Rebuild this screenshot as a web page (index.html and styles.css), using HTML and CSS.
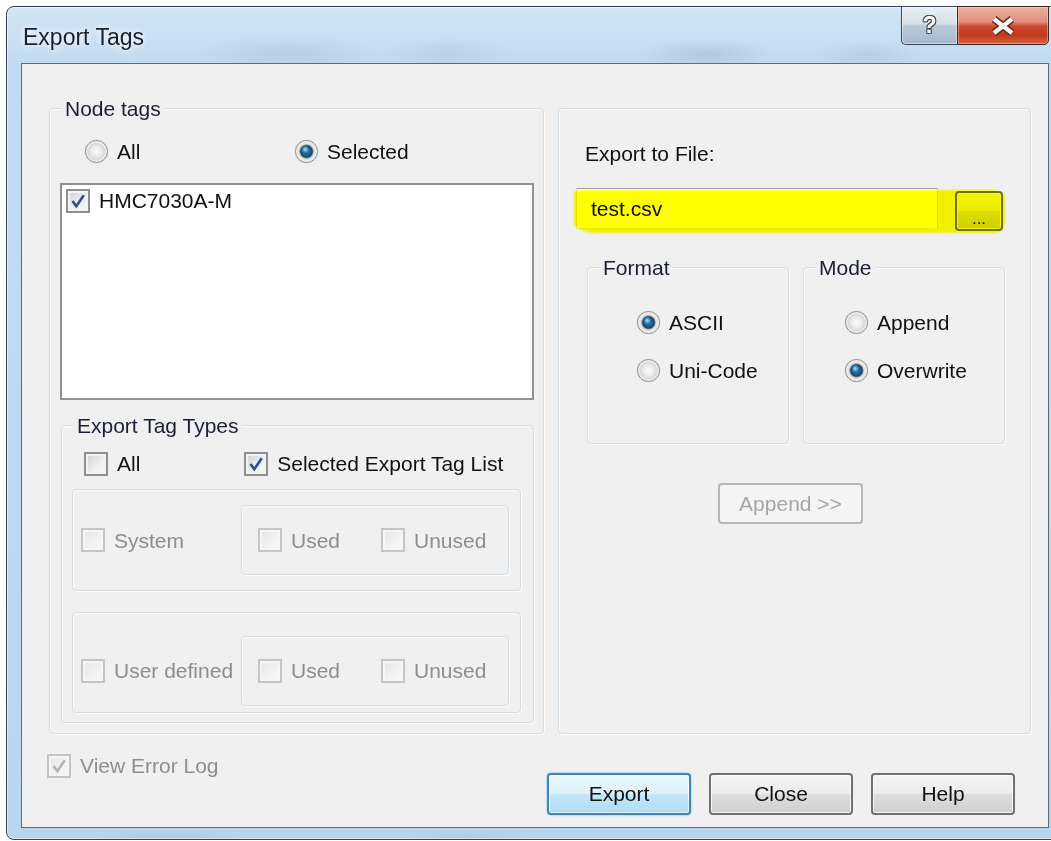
FILE: index.html
```html
<!DOCTYPE html>
<html lang="en">
<head>
<meta charset="utf-8">
<title>Export Tags</title>
<link rel="stylesheet" href="styles.css">
</head>
<body>
<div class="window">
  <div class="titlebar">
    <span class="title">Export Tags</span>
    <div class="caption-buttons">
      <button class="cap cap-help"><span class="cap-q">?</span></button>
      <button class="cap cap-close">
        <svg class="cap-x" width="28" height="20" viewBox="0 0 28 20">
          <path d="M5 3 L23 17 M23 3 L5 17" stroke="#6a2c1f" stroke-width="7.5" fill="none"/>
          <path d="M5 3 L23 17 M23 3 L5 17" stroke="#f4f4f4" stroke-width="4.4" fill="none"/>
        </svg>
      </button>
    </div>
  </div>

  <div class="client">
    <div class="panels">
      <div class="group panel-left">
        <span class="group-label">Node tags</span>
        <div class="radio-row">
          <span class="opt"><span class="radio"></span>All</span>
          <span class="opt"><span class="radio on"></span>Selected</span>
        </div>
        <div class="listbox">
          <div class="list-item">
            <span class="check"><svg class="tick" viewBox="0 0 20 20"><path d="M4.5 10 L8.3 15.2 L15.8 4.2"/></svg></span>HMC7030A-M
          </div>
        </div>

        <div class="group tag-types">
          <span class="group-label">Export Tag Types</span>
          <div class="check-row">
            <span class="opt"><span class="check"></span>All</span>
            <span class="opt opt-wide"><span class="check"><svg class="tick" viewBox="0 0 20 20"><path d="M4.5 10 L8.3 15.2 L15.8 4.2"/></svg></span>Selected Export Tag List</span>
          </div>

          <div class="group subgroup">
            <span class="opt disabled sub-name"><span class="check"></span>System</span>
            <div class="group subgroup-inner">
              <span class="opt disabled sub-used"><span class="check"></span>Used</span>
              <span class="opt disabled"><span class="check"></span>Unused</span>
            </div>
          </div>

          <div class="group subgroup subgroup-low">
            <span class="opt disabled sub-name"><span class="check"></span>User defined</span>
            <div class="group subgroup-inner">
              <span class="opt disabled sub-used"><span class="check"></span>Used</span>
              <span class="opt disabled"><span class="check"></span>Unused</span>
            </div>
          </div>
        </div>
      </div>

      <div class="group panel-right">
        <div class="file-label">Export to File:</div>
        <div class="file-row">
          <div class="textbox">test.csv</div>
          <button class="btn browse">...</button>
        </div>

        <div class="option-groups">
          <div class="group option-group">
            <span class="group-label">Format</span>
            <div class="radio-col format-col">
              <span class="opt"><span class="radio on"></span>ASCII</span>
              <span class="opt"><span class="radio"></span>Uni-Code</span>
            </div>
          </div>
          <div class="group option-group">
            <span class="group-label">Mode</span>
            <div class="radio-col mode-col">
              <span class="opt"><span class="radio"></span>Append</span>
              <span class="opt"><span class="radio on"></span>Overwrite</span>
            </div>
          </div>
        </div>

        <button class="btn btn-disabled append">Append &gt;&gt;</button>
      </div>
    </div>

    <div class="footer">
      <span class="opt disabled error-log"><span class="check"><svg class="tick" viewBox="0 0 20 20"><path d="M4.5 10 L8.3 15.2 L15.8 4.2"/></svg></span>View Error Log</span>
      <div class="actions">
        <button class="btn btn-default">Export</button>
        <button class="btn">Close</button>
        <button class="btn">Help</button>
      </div>
    </div>
  </div>
</div>
</body>
</html>
```

FILE: styles.css
```css
* {
  box-sizing: border-box;
}

html,
body {
  margin: 0;
  height: 100%;
}

body {
  background: #ffffff;
  overflow: hidden;
  font-family: "Liberation Sans", Arial, sans-serif;
  font-size: 21px;
  color: #111111;
}

/* ---------- window frame (Aero glass) ---------- */
.window {
  width: 1058px;
  height: 834px;
  margin: 6px 0 0 6px;
  padding: 0 14px 11px;
  border: 1px solid #34404c;
  border-radius: 8px;
  background:
    radial-gradient(ellipse 120px 24px at 280px 46px, rgba(110, 130, 150, 0.16), transparent 75%),
    radial-gradient(ellipse 90px 20px at 440px 46px, rgba(110, 130, 150, 0.12), transparent 75%),
    radial-gradient(ellipse 90px 20px at 700px 47px, rgba(100, 120, 140, 0.2), transparent 75%),
    radial-gradient(ellipse 70px 18px at 860px 48px, rgba(100, 120, 140, 0.14), transparent 75%),
    radial-gradient(ellipse 120px 14px at 160px 834px, rgba(90, 110, 130, 0.18), transparent 75%),
    radial-gradient(ellipse 110px 14px at 460px 834px, rgba(90, 110, 130, 0.14), transparent 75%),
    linear-gradient(180deg, #d2e4f5 0%, #c3dbf1 6%, #b8d5f0 100%);
  box-shadow: inset 0 0 0 1px rgba(255, 255, 255, 0.55);
}

.titlebar {
  height: 56px;
  display: flex;
  justify-content: space-between;
  align-items: flex-start;
}

.title {
  margin: 16px 0 0 2px;
  font-size: 23px;
  line-height: 28px;
  color: #18222f;
  text-shadow: 0 0 6px #ffffff, 0 0 12px rgba(255, 255, 255, 0.8);
}

.caption-buttons {
  display: flex;
  margin-top: -1px;
}

.cap {
  height: 39px;
  padding: 0;
  border: 1px solid #3a4551;
  display: flex;
  align-items: center;
  justify-content: center;
  font-family: inherit;
}

.cap-help {
  width: 56px;
  border-right: none;
  border-radius: 0 0 0 5px;
  background: linear-gradient(180deg, #e8eef4 0%, #d6dfe8 45%, #b9c8d7 52%, #a6bace 100%);
  box-shadow: inset 0 0 0 1px rgba(255, 255, 255, 0.45);
}

.cap-q {
  font-weight: bold;
  font-size: 23px;
  line-height: 1;
  color: #ffffff;
  text-shadow:
    -1px 0 #46525e, 1px 0 #46525e, 0 -1px #46525e, 0 1px #46525e,
    -1px -1px #46525e, 1px 1px #46525e, -1px 1px #46525e, 1px -1px #46525e;
}

.cap-close {
  width: 92px;
  border-radius: 0 0 5px 0;
  border-color: #3a2620;
  background: linear-gradient(180deg, #eab0a2 0%, #e18f7c 40%, #cc4a30 52%, #c3381d 75%, #d5623f 100%);
  box-shadow: inset 0 0 0 1px rgba(255, 220, 210, 0.45);
}

.cap-x {
  display: block;
}

/* ---------- dialog client area ---------- */
.client {
  height: 765px;
  border: 1px solid #5d6b79;
  background: #f0f0f0;
  padding: 44px 0 0 27px;
}

.panels {
  display: flex;
  gap: 14px;
}

.group {
  border: 1px solid #d5dfe5;
  border-radius: 4px;
  box-shadow: inset 1px 1px 0 #fbfbfb, 1px 1px 0 #fbfbfb;
}

.group-label {
  display: block;
  width: max-content;
  margin: -13px 0 0 12px;
  padding: 0 3px;
  line-height: 25px;
  background: #f0f0f0;
  color: #1a1f36;
}

.panel-left {
  width: 495px;
  height: 626px;
}

.panel-right {
  width: 473px;
  height: 626px;
}

/* ---------- option items ---------- */
.opt {
  display: flex;
  align-items: center;
  gap: 9px;
  height: 25px;
  line-height: 25px;
  white-space: nowrap;
}

.opt.disabled {
  color: #8e8e8e;
}

.radio {
  flex: none;
  width: 23px;
  height: 23px;
  border-radius: 50%;
  border: 1.5px solid #8c8e90;
  background: radial-gradient(circle at 50% 50%, #fbfbfb 0, #ececec 5px, #d9d9d9 8px, #f6f6f6 10.5px);
  box-shadow: 0 0 1px rgba(0, 0, 0, 0.25);
}

.radio.on {
  background:
    radial-gradient(circle at 44% 40%, rgba(175, 232, 255, 0.95) 0, rgba(90, 180, 230, 0.55) 2.5px, transparent 4px),
    radial-gradient(circle at 50% 50%, #2a7cb5 0, #1b5a88 4.5px, #173f60 5.8px, #8c98a2 6.6px, #dedede 7.6px, #f7f7f7 10.5px);
}

.check {
  flex: none;
  width: 24px;
  height: 24px;
  border: 2px solid #8e8f8f;
  background: linear-gradient(135deg, #cdd1d6 0%, #eef0f2 60%, #f8f8f8 100%);
  box-shadow: inset 0 0 0 2px #f3f3f3;
}

.opt.disabled .check {
  border-color: #c5c5c5;
  background: linear-gradient(135deg, #e6e6e6 0%, #f4f4f4 70%, #f8f8f8 100%);
  box-shadow: inset 0 0 0 2px #f6f6f6;
}

.tick {
  display: block;
  width: 20px;
  height: 20px;
}

.tick path {
  fill: none;
  stroke: #3a4c8e;
  stroke-width: 2.6;
  stroke-linejoin: miter;
}

.opt.disabled .tick path {
  stroke: #b4b4b4;
}

/* ---------- node tags ---------- */
.radio-row {
  display: flex;
  align-items: center;
  height: 25px;
  margin-top: 18px;
  padding-left: 35px;
}

.radio-row .opt:first-child {
  width: 210px;
}

.listbox {
  height: 217px;
  margin: 19px 9px 0 10px;
  padding: 3px 0 0 4px;
  border: 2px solid #8d9299;
  background: #ffffff;
}

.list-item {
  display: flex;
  align-items: center;
  gap: 9px;
  height: 25px;
  color: #111111;
}

.tag-types {
  margin: 25px 9px 0 11px;
  padding-bottom: 9px;
}

.check-row {
  display: flex;
  align-items: center;
  height: 35px;
  margin-top: 8px;
  padding-left: 22px;
}

.check-row .opt:first-child {
  width: 162px;
}

.opt-wide {
  align-self: stretch;
  height: auto;
  width: 292px;
  background: #f0f0f0;
}

.subgroup {
  height: 102px;
  margin: 8px 12px 0 10px;
  padding-left: 8px;
  display: flex;
  align-items: center;
}

.subgroup-low {
  height: 101px;
  margin-top: 21px;
  padding-top: 16px;
}

.sub-name {
  width: 160px;
}

.subgroup-inner {
  width: 268px;
  height: 70px;
  padding-left: 16px;
  display: flex;
  align-items: center;
}

.sub-used {
  width: 123px;
}

/* ---------- export to file ---------- */
.file-label {
  margin: 32px 0 0 26px;
  line-height: 25px;
}

.file-row {
  position: relative;
  display: flex;
  align-items: flex-start;
  gap: 17px;
  margin: 22px 0 0 17px;
}

/* highlighter stroke across the file name field */
.file-row::after {
  content: "";
  position: absolute;
  left: -2px;
  top: 2px;
  width: 431px;
  height: 43px;
  background: #ffff00;
  mix-blend-mode: multiply;
  border-radius: 6px 18px 10px 24px / 4px 8px 12px 10px;
  filter: blur(1px);
  pointer-events: none;
}

.textbox {
  width: 362px;
  height: 41px;
  padding-left: 14px;
  display: flex;
  align-items: center;
  border: 1px solid;
  border-color: #9fa2a8 #dbdfe6 #e3e9ef #e2e3ea;
  background: #ffffff;
  color: #111111;
}

.option-groups {
  display: flex;
  gap: 14px;
  margin: 36px 0 0 28px;
}

.option-group {
  width: 202px;
  height: 177px;
}

.radio-col {
  display: flex;
  flex-direction: column;
  gap: 23px;
  margin-top: 30px;
}

.format-col {
  padding-left: 49px;
}

.mode-col {
  padding-left: 41px;
}

/* ---------- push buttons ---------- */
.btn {
  font-family: inherit;
  font-size: 21px;
  color: #111111;
  padding: 0;
  border: 2px solid #707070;
  border-radius: 4px;
  background: linear-gradient(180deg, #f3f3f3 0%, #ececec 48%, #dddddd 52%, #cfcfcf 100%);
  box-shadow: inset 0 0 0 1px rgba(255, 255, 255, 0.8);
}

.browse {
  width: 48px;
  height: 40px;
  margin-top: 3px;
  font-size: 17px;
  line-height: 40px;
  padding-top: 6px;
}

.btn-disabled {
  border-color: #b3b7ba;
  background: #f4f4f4;
  color: #a6a6a6;
  box-shadow: none;
}

.append {
  display: block;
  width: 145px;
  height: 41px;
  margin: 39px 0 0 159px;
}

.btn-default {
  border-color: #3c86bd;
  background: linear-gradient(180deg, #ebf7fe 0%, #dcf1fc 48%, #c3e7fb 52%, #aedcf5 100%);
  box-shadow: inset 0 0 0 1px rgba(255, 255, 255, 0.7), 0 0 2px #5ab6ea;
}

/* ---------- footer ---------- */
.footer {
  display: flex;
  align-items: flex-start;
  margin-top: 19px;
}

.error-log {
  margin-left: -2px;
}

.actions {
  display: flex;
  gap: 18px;
  margin: 20px 33px 0 auto;
}

.actions .btn {
  width: 144px;
  height: 42px;
}
```
